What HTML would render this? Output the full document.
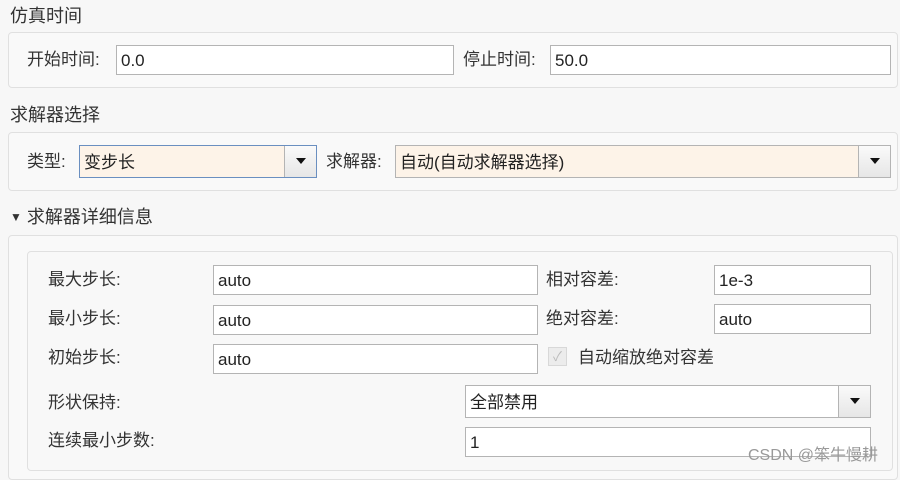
<!DOCTYPE html>
<html><head><meta charset="utf-8"><style>
body{margin:0;width:900px;height:473px;background:#f7f7f7;font-family:"Liberation Sans","Noto Sans CJK SC",sans-serif;font-size:17px;color:#333;position:relative;overflow:hidden}
.a{position:absolute}
.t{position:absolute;line-height:20px;white-space:nowrap}
.p{position:absolute;border:1px solid #e0e0e0;border-radius:4px;background:#f9f9f9;box-sizing:border-box}
.i{position:absolute;border:1px solid #b4b4b4;background:#fff;box-sizing:border-box;padding-left:4px;line-height:30px;font-size:17px;color:#222}
.c{background:#fdf3e8}
.b{position:absolute;top:0;right:0;bottom:0;width:31px;border-left:1px solid #b4b4b4;background:linear-gradient(#fafafa,#e6e6e6)}
.b:after{content:"";position:absolute;left:11px;top:12px;border-left:5px solid transparent;border-right:5px solid transparent;border-top:6px solid #111}
</style></head><body>
<div class="t" style="left:10px;top:6px;font-size:18px">仿真时间</div>
<div class="p" style="left:8px;top:32px;width:890px;height:56px"></div>
<div class="t" style="left:27px;top:50px">开始时间:</div>
<div class="i" style="left:116px;top:45px;width:338px;height:30px">0.0</div>
<div class="t" style="left:463px;top:50px">停止时间:</div>
<div class="i" style="left:550px;top:45px;width:341px;height:30px">50.0</div>

<div class="t" style="left:10px;top:105px;font-size:18px">求解器选择</div>
<div class="p" style="left:8px;top:132px;width:890px;height:59px"></div>
<div class="t" style="left:27px;top:152px">类型:</div>
<div class="i c" style="left:79px;top:145px;width:238px;height:33px;border-color:#6a8fc0;line-height:33px">变步长<div class="b"></div></div>
<div class="t" style="left:326px;top:152px">求解器:</div>
<div class="i c" style="left:395px;top:145px;width:496px;height:33px;line-height:33px">自动(自动求解器选择)<div class="b"></div></div>

<div class="t" style="left:10px;top:207px;font-size:18px"><span style="font-size:12px;position:relative;top:-2px">▼</span> 求解器详细信息</div>
<div class="p" style="left:8px;top:235px;width:890px;height:245px"></div>
<div class="p" style="left:27px;top:251px;width:866px;height:220px;background:#f8f8f8"></div>

<div class="t" style="left:48px;top:270px">最大步长:</div>
<div class="i" style="left:213px;top:265px;width:325px;height:30px">auto</div>
<div class="t" style="left:48px;top:309px">最小步长:</div>
<div class="i" style="left:213px;top:305px;width:325px;height:30px">auto</div>
<div class="t" style="left:48px;top:348px">初始步长:</div>
<div class="i" style="left:213px;top:344px;width:325px;height:30px">auto</div>
<div class="t" style="left:48px;top:393px">形状保持:</div>
<div class="t" style="left:48px;top:431px">连续最小步数:</div>

<div class="t" style="left:546px;top:270px">相对容差:</div>
<div class="i" style="left:714px;top:265px;width:157px;height:30px">1e-3</div>
<div class="t" style="left:546px;top:309px">绝对容差:</div>
<div class="i" style="left:714px;top:304px;width:157px;height:30px">auto</div>
<div class="a" style="left:548px;top:347px;width:19px;height:19px;border:1px solid #d8d8d8;background:#ececec;box-sizing:border-box;color:#bbb;font-size:13px;text-align:center;line-height:17px">✓</div>
<div class="t" style="left:578px;top:348px">自动缩放绝对容差</div>

<div class="i" style="left:465px;top:385px;width:406px;height:33px;line-height:33px">全部禁用<div class="b"></div></div>
<div class="i" style="left:465px;top:427px;width:406px;height:30px">1</div>
<div class="t" style="left:748px;top:446px;color:#999;font-size:16px">CSDN @笨牛慢耕</div>
</body></html>
